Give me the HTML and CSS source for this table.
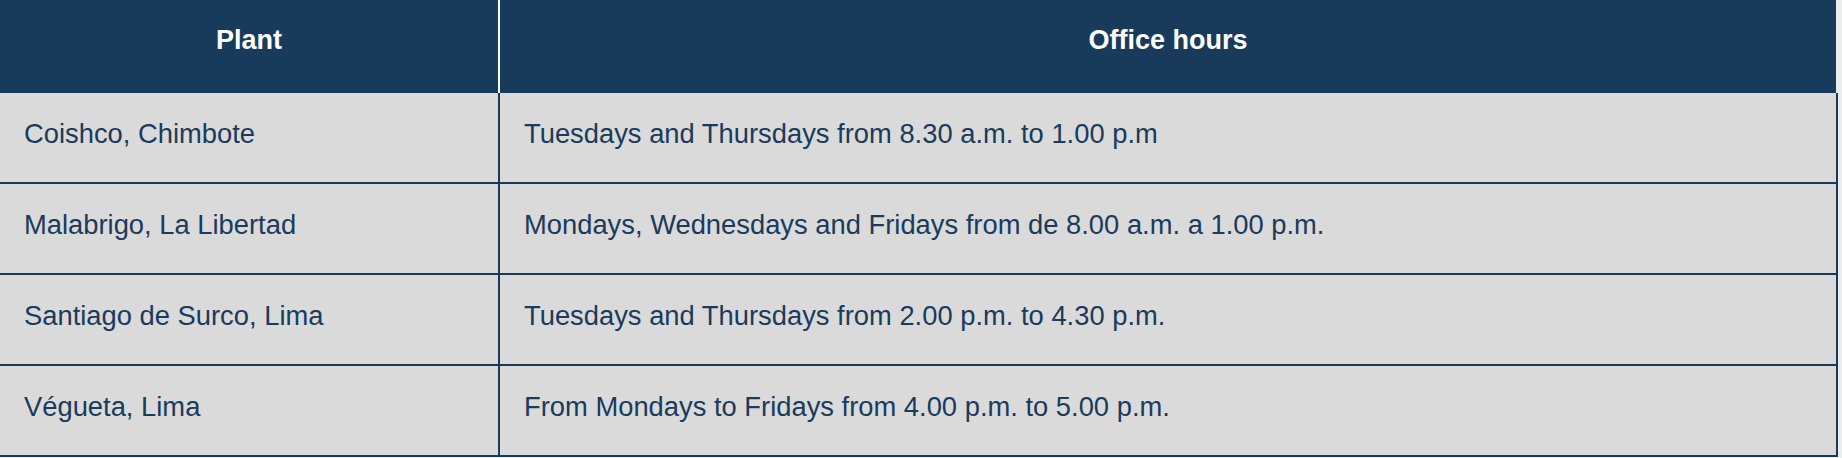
FILE: index.html
```html
<!DOCTYPE html>
<html lang="en">
<head>
<meta charset="utf-8">
<title>Office hours</title>
<link rel="stylesheet" href="styles.css">
</head>
<body>
<table class="hours">
  <thead>
    <tr>
      <th class="col-plant">Plant</th>
      <th class="col-hours">Office hours</th>
    </tr>
  </thead>
  <tbody>
    <tr>
      <td>Coishco, Chimbote</td>
      <td>Tuesdays and Thursdays from 8.30 a.m. to 1.00 p.m</td>
    </tr>
    <tr>
      <td>Malabrigo, La Libertad</td>
      <td>Mondays, Wednesdays and Fridays from de 8.00 a.m. a 1.00 p.m.</td>
    </tr>
    <tr>
      <td>Santiago de Surco, Lima</td>
      <td>Tuesdays and Thursdays from 2.00 p.m. to 4.30 p.m.</td>
    </tr>
    <tr>
      <td>Végueta, Lima</td>
      <td>From Mondays to Fridays from 4.00 p.m. to 5.00 p.m.</td>
    </tr>
  </tbody>
</table>
</body>
</html>
```

FILE: styles.css
```css
html, body {
  margin: 0;
  padding: 0;
  background: #ececec;
}

body {
  font-family: "Liberation Sans", Arial, Helvetica, sans-serif;
}

.hours {
  width: 1838px;
  border-collapse: separate;
  border-spacing: 0;
  table-layout: fixed;
}

.hours th,
.hours td {
  box-sizing: border-box;
  vertical-align: top;
  font-size: 27px;
  line-height: 31px;
  padding: 25px 24px 0 24px;
}

.hours th {
  height: 93px;
  background: #193b5b;
  color: #ffffff;
  font-weight: bold;
  text-align: center;
}

.hours .col-plant {
  width: 500px;
  border-right: 2px solid #ffffff;
}

.hours .col-hours {
  border-right: 2px solid #ececec;
}

.hours td {
  height: 91px;
  font-size: 27.35px;
  background: #dadada;
  color: #1a3b5c;
  text-align: left;
  border-bottom: 2px solid #193b5b;
  border-right: 2px solid #193b5b;
}
```
